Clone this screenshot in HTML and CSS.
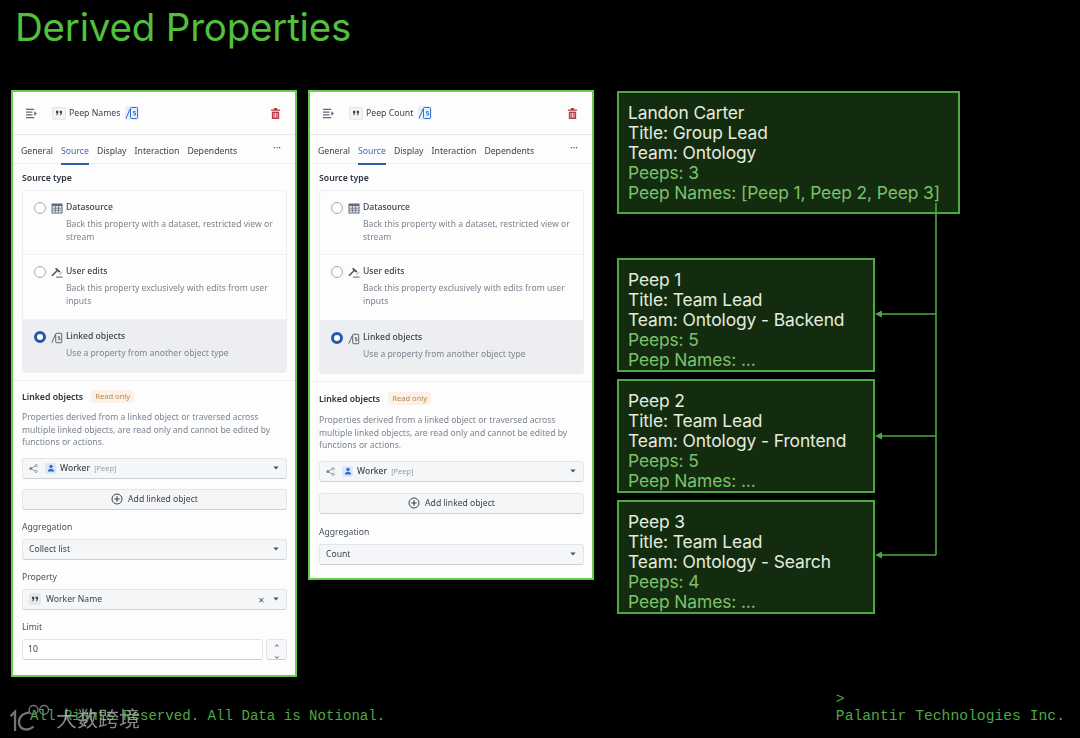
FILE: index.html
```html
<!DOCTYPE html>
<html lang="en">
<head>
<meta charset="utf-8">
<title>Derived Properties</title>
<link rel="stylesheet" href="styles.css">
</head>
<body>
<svg width="0" height="0" class="defs">
  <defs>
    <symbol id="i-menu" viewBox="0 0 14 12"><path d="M1 1.5h9M1 4.5h7M1 7.5h7M1 10.5h9" stroke="#5f6b7a" stroke-width="1.4" fill="none"/><path d="M10 3.5l3 2.5-3 2.5z" fill="#5f6b7a"/></symbol>
    <symbol id="i-quote" viewBox="0 0 10 8"><path d="M1 1h3v3L2.6 7H1.4l.8-3H1zM6 1h3v3L7.6 7H6.4l.8-3H6z" fill="#39424e"/></symbol>
    <symbol id="i-fn" viewBox="0 0 14 14"><path d="M1 12.5L5 3" stroke="currentColor" stroke-width="1" fill="none"/><rect x="5.5" y="1.5" width="7" height="11" rx="1" stroke="currentColor" stroke-width="1" fill="none"/><path d="M10.5 5.5H8.5v1.5h2v2h-2.2" stroke="currentColor" stroke-width=".9" fill="none"/></symbol>
    <symbol id="i-trash" viewBox="0 0 12 14"><path d="M1 2.5h10v1.5H1zM4.2 1h3.6v1.5H4.2z" fill="#b83a44"/><path d="M2 5h8v8H2z" fill="#b83a44"/><path d="M4.3 6.5v5M6 6.5v5M7.7 6.5v5" stroke="#fff" stroke-width=".8"/></symbol>
    <symbol id="i-table" viewBox="0 0 12 11"><path d="M.5.5h11v10H.5z" fill="#5f6b7a"/><path d="M1.5 3h9v6.5h-9z" fill="#e8ebee"/><path d="M1.5 5.2h9M1.5 7.3h9M4.4 3v6.5M7.5 3v6.5" stroke="#5f6b7a" stroke-width=".8"/></symbol>
    <symbol id="i-edit" viewBox="0 0 13 12"><path d="M1 9.5L6.5 4" stroke="#46505c" stroke-width="1.6"/><path d="M5 1.5l4.5 4" stroke="#46505c" stroke-width="2"/><path d="M5.5 11h7" stroke="#46505c" stroke-width="1"/><path d="M9 8.5l3-3" stroke="#8a94a0" stroke-width="1"/></symbol>
    <symbol id="i-share" viewBox="0 0 12 12"><circle cx="2.5" cy="6" r="2" fill="#7b8794"/><circle cx="9.5" cy="2.2" r="1.6" fill="none" stroke="#7b8794"/><circle cx="9.5" cy="9.8" r="1.6" fill="none" stroke="#7b8794"/><path d="M3.5 5.2l4.7-2.5M3.5 6.8l4.7 2.5" stroke="#7b8794"/></symbol>
    <symbol id="i-user" viewBox="0 0 10 10"><circle cx="5" cy="3" r="2.2" fill="#2f6fcf"/><path d="M1 9.5c0-2.6 1.8-3.6 4-3.6s4 1 4 3.6z" fill="#2f6fcf"/></symbol>
    <symbol id="i-plus" viewBox="0 0 12 12"><circle cx="6" cy="6" r="5" fill="none" stroke="#39424e" stroke-width="1"/><path d="M6 3.3v5.4M3.3 6h5.4" stroke="#39424e" stroke-width="1.1"/></symbol>
    <symbol id="i-caret" viewBox="0 0 8 5"><path d="M.5.5h7L4 4.5z" fill="#46505c"/></symbol>
  </defs>
</svg>
<main class="slide">
  <h1 class="title">Derived Properties</h1>
  <div class="content">
    <section class="panel panel-names">
      <header class="phead">
        <svg class="ico-menu"><use href="#i-menu"/></svg>
        <span class="qbox"><svg class="ico-q"><use href="#i-quote"/></svg></span>
        <span class="pname">Peep Names</span>
        <span class="fnbox"><svg class="ico-fn"><use href="#i-fn"/></svg></span>
        <svg class="ico-trash"><use href="#i-trash"/></svg>
      </header>
      <nav class="tabs">
        <span class="tab">General</span><span class="tab active">Source</span><span class="tab">Display</span><span class="tab">Interaction</span><span class="tab">Dependents</span><span class="more">•••</span>
      </nav>
      <div class="sec">
        <div class="label-b">Source type</div>
        <div class="card">
          <div class="opt opt-a"><span class="radio"></span><svg class="ico-o"><use href="#i-table"/></svg><div class="otext"><div class="otitle">Datasource</div><div class="odesc">Back this property with a dataset, restricted view or stream</div></div></div>
          <div class="opt opt-b"><span class="radio"></span><svg class="ico-o"><use href="#i-edit"/></svg><div class="otext"><div class="otitle">User edits</div><div class="odesc">Back this property exclusively with edits from user inputs</div></div></div>
          <div class="opt opt-c sel"><span class="radio on"></span><svg class="ico-o ico-l"><use href="#i-fn"/></svg><div class="otext"><div class="otitle">Linked objects</div><div class="odesc">Use a property from another object type</div></div></div>
        </div>
      </div>
      <div class="sec2">
        <div class="lhead"><span class="label-b">Linked objects</span><span class="tag">Read only</span></div>
        <p class="desc">Properties derived from a linked object or traversed across multiple linked objects, are read only and cannot be edited by functions or actions.</p>
        <div class="select sel-worker"><svg class="ico-s"><use href="#i-share"/></svg><span class="ubox"><svg class="ico-u"><use href="#i-user"/></svg></span><span class="sval strong">Worker</span><span class="sub">[Peep]</span><svg class="caret"><use href="#i-caret"/></svg></div>
        <div class="btn"><svg class="ico-p"><use href="#i-plus"/></svg><span>Add linked object</span></div>
        <div class="flabel">Aggregation</div>
        <div class="select"><span class="sval">Collect list</span><svg class="caret"><use href="#i-caret"/></svg></div>
        <div class="flabel">Property</div>
        <div class="select"><span class="qbox small"><svg class="ico-q"><use href="#i-quote"/></svg></span><span class="sval">Worker Name</span><span class="clear">✕</span><svg class="caret tight"><use href="#i-caret"/></svg></div>
        <div class="flabel">Limit</div>
        <div class="limit"><div class="input">10</div><div class="stepper"><span>⌃</span><span class="down">⌃</span></div></div>
      </div>
    </section>

    <section class="panel panel-count">
      <header class="phead">
        <svg class="ico-menu"><use href="#i-menu"/></svg>
        <span class="qbox"><svg class="ico-q"><use href="#i-quote"/></svg></span>
        <span class="pname">Peep Count</span>
        <span class="fnbox"><svg class="ico-fn"><use href="#i-fn"/></svg></span>
        <svg class="ico-trash"><use href="#i-trash"/></svg>
      </header>
      <nav class="tabs">
        <span class="tab">General</span><span class="tab active">Source</span><span class="tab">Display</span><span class="tab">Interaction</span><span class="tab">Dependents</span><span class="more">•••</span>
      </nav>
      <div class="sec">
        <div class="label-b">Source type</div>
        <div class="card">
          <div class="opt opt-a"><span class="radio"></span><svg class="ico-o"><use href="#i-table"/></svg><div class="otext"><div class="otitle">Datasource</div><div class="odesc">Back this property with a dataset, restricted view or stream</div></div></div>
          <div class="opt opt-b"><span class="radio"></span><svg class="ico-o"><use href="#i-edit"/></svg><div class="otext"><div class="otitle">User edits</div><div class="odesc">Back this property exclusively with edits from user inputs</div></div></div>
          <div class="opt opt-c sel"><span class="radio on"></span><svg class="ico-o ico-l"><use href="#i-fn"/></svg><div class="otext"><div class="otitle">Linked objects</div><div class="odesc">Use a property from another object type</div></div></div>
        </div>
      </div>
      <div class="sec2">
        <div class="lhead"><span class="label-b">Linked objects</span><span class="tag">Read only</span></div>
        <p class="desc">Properties derived from a linked object or traversed across multiple linked objects, are read only and cannot be edited by functions or actions.</p>
        <div class="select sel-worker"><svg class="ico-s"><use href="#i-share"/></svg><span class="ubox"><svg class="ico-u"><use href="#i-user"/></svg></span><span class="sval strong">Worker</span><span class="sub">[Peep]</span><svg class="caret"><use href="#i-caret"/></svg></div>
        <div class="btn"><svg class="ico-p"><use href="#i-plus"/></svg><span>Add linked object</span></div>
        <div class="flabel">Aggregation</div>
        <div class="select"><span class="sval">Count</span><svg class="caret"><use href="#i-caret"/></svg></div>
      </div>
    </section>

    <aside class="cards">
      <div class="box box-top">
        <div>Landon Carter</div><div>Title: Group Lead</div><div>Team: Ontology</div><div class="g">Peeps: 3</div><div class="g">Peep Names: [Peep 1, Peep 2, Peep 3]</div>
      </div>
      <div class="box box-sub">
        <div>Peep 1</div><div>Title: Team Lead</div><div>Team: Ontology - Backend</div><div class="g">Peeps: 5</div><div class="g">Peep Names: ...</div>
      </div>
      <div class="box box-sub">
        <div>Peep 2</div><div>Title: Team Lead</div><div>Team: Ontology - Frontend</div><div class="g">Peeps: 5</div><div class="g">Peep Names: ...</div>
      </div>
      <div class="box box-sub">
        <div>Peep 3</div><div>Title: Team Lead</div><div>Team: Ontology - Search</div><div class="g">Peeps: 4</div><div class="g">Peep Names: ...</div>
      </div>
    </aside>
  </div>
  <footer class="foot">
    <span class="foot-l">All Rights Reserved. All Data is Notional.</span>
    <span class="foot-r"><span>&gt;</span><span>Palantir Technologies Inc.</span></span>
  </footer>

  <svg class="wires" viewBox="0 0 1080 738">
    <path d="M936 203V555M936 314H878M936 436H878M936 555H878" stroke="#4ea843" stroke-width="1.6" fill="none"/>
    <path d="M875 314l7-3.5v7zM875 436l7-3.5v7zM875 555l7-3.5v7z" fill="#4ea843"/>
  </svg>
  <div class="wm">
    <svg class="wm-logo" viewBox="0 0 50 34"><path d="M3 16l5-5v22M25 12C15 12 11 20 13 26c2 6 10 7 16 2" stroke="#9a9a9a" stroke-width="2.6" fill="none"/><circle cx="29" cy="9" r="5" stroke="#9a9a9a" stroke-width="1.6" fill="none"/><circle cx="41" cy="9" r="5" stroke="#9a9a9a" stroke-width="1.6" fill="none"/></svg>
    <span class="wm-t">大数跨境</span>
  </div>
</main>
</body>
</html>
```
FILE: styles.css
```css
* { box-sizing: border-box; }
html, body { margin: 0; padding: 0; background: #000; }
.defs { position: absolute; }
.slide {
  position: relative;
  width: 1080px;
  height: 738px;
  overflow: hidden;
  background: #000;
  display: flex;
  flex-direction: column;
  font-family: "Noto Sans", sans-serif;
}
.title {
  margin: 0;
  height: 90px;
  padding: 4px 0 0 15px;
  font: 400 38.5px/46px Inter, "Liberation Sans", sans-serif;
  color: #52c03c;
  letter-spacing: -0.2px;
}
.content { display: flex; align-items: flex-start; padding-left: 11px; }

.panel {
  width: 286px;
  background: #fdfdfd;
  border: 2.5px solid #66cc4c;
  color: #39424e;
  font-size: 8.6px;
  filter: blur(0.35px);
  flex: none;
}
.panel-names { height: 587px; }
.panel-count { height: 490px; margin-left: 11px; }

.phead {
  height: 43px;
  display: flex;
  align-items: center;
  padding: 0 14px 0 12px;
  border-bottom: 1px solid #e6e8eb;
}
.ico-menu { width: 13px; height: 11px; }
.qbox {
  width: 14px; height: 13px; margin-left: 14px;
  background: #f3f4f6; border: 1px solid #e3e5e8; border-radius: 2px;
  display: flex; align-items: center; justify-content: center;
}
.qbox.small { margin: 0 5px 0 0; width: 12px; height: 12px; background: #e6e8eb; }
.ico-q { width: 8px; height: 6px; }
.pname { margin-left: 3px; font-size: 8.7px; color: #39424e; }
.fnbox {
  width: 14px; height: 14px; margin-left: 5px; color: #2f6fcf;
  background: #e6effa; border-radius: 2px; display: flex;
}
.ico-fn { width: 14px; height: 14px; }
.ico-trash { width: 11px; height: 13px; margin-left: auto; }

.tabs {
  height: 29px;
  display: flex;
  align-items: center;
  padding: 2px 14px 0 8px;
  gap: 8px;
  border-bottom: 1px solid #eceef0;
  font-size: 8.7px;
}
.tab { height: 29px; line-height: 31px; white-space: nowrap; }
.tab.active { color: #3f6bb0; border-bottom: 2px solid #2d5fa8; }
.more { margin-left: auto; font-size: 6px; letter-spacing: 0.3px; padding-bottom: 5px; color: #46505c; }

.sec { padding: 8px 8px 7px 9px; border-bottom: 1px solid #eceef0; }
.label-b { font-weight: 600; font-size: 8.7px; color: #2b333d; line-height: 12px; }
.card {
  margin-top: 6px;
  border: 1px solid #eceef0;
  border-radius: 3px;
  overflow: hidden;
}
.opt { display: flex; align-items: flex-start; padding: 11px 8px 0 11px; border-bottom: 1px solid #f0f1f3; }
.opt-a { height: 64px; }
.opt-b { height: 65px; }
.opt-c { height: 52px; border-bottom: 0; }
.panel-count .opt-b { height: 66px; }
.opt.sel { background: #eceef1; }
.radio {
  width: 12px; height: 12px; border-radius: 50%;
  border: 1px solid #a4acb6; background: #fff; flex: none;
}
.radio.on { border: 3.5px solid #2559ad; }
.ico-o { width: 12px; height: 11px; margin: 1px 0 0 5px; flex: none; }
.ico-l { color: #46505c; height: 12px; }
.otext { margin-left: 3px; }
.otitle { line-height: 11px; color: #39424e; font-weight: 500; }
.odesc { margin-top: 5px; line-height: 12.8px; color: #7b8490; width: 212px; }

.sec2 { padding: 9px 8px 0 9px; }
.panel-count .sec2 { padding-top: 10px; }
.lhead { display: flex; align-items: center; gap: 8px; }
.tag { background: #fbf1e6; color: #b58a4e; border-radius: 3px; padding: 1px 4px; font-size: 7.6px; line-height: 11px; }
.desc { margin: 8px 0 0; line-height: 12.6px; color: #7b8490; }
.panel-count .desc { margin-top: 9px; }

.select, .btn, .input, .stepper {
  border: 1px solid #e3e5e8;
  border-bottom-color: #ccd0d5;
  border-radius: 3px;
  background: #f5f6f7;
}
.select { height: 21px; display: flex; align-items: center; padding: 0 6px; margin-top: 0; }
.sel-worker { margin-top: 9px; }
.ico-s { width: 9px; height: 9px; }
.ubox { width: 11px; height: 11px; background: #dbe8f8; border-radius: 2px; margin: 0 4px 0 7px; display: flex; align-items: center; justify-content: center; }
.ico-u { width: 8px; height: 8px; }
.sval { color: #39424e; }
.sval.strong { font-weight: 500; }
.sub { margin-left: 4px; font-size: 7.4px; color: #98a0aa; }
.caret { width: 6px; height: 4px; margin-left: auto; margin-right: 1px; }
.caret.tight { margin-left: 8px; }
.clear { margin-left: auto; font-size: 8px; color: #46505c; }
.btn { height: 21px; margin-top: 10px; display: flex; align-items: center; justify-content: center; color: #39424e; }
.ico-p { width: 12px; height: 12px; margin-right: 5px; }
.panel-count .btn { margin-top: 11px; }
.flabel { margin: 11px 0 6px; line-height: 12px; color: #46505c; }
.panel-count .flabel { margin-top: 12px; }
.limit { display: flex; gap: 3px; }
.input { flex: 1; height: 21px; background: #fff; line-height: 19px; padding-left: 5px; }
.stepper { width: 21px; height: 21px; display: flex; flex-direction: column; align-items: center; line-height: 9px; font-size: 9px; color: #46505c; background: #f7f8f9; overflow: hidden; padding-top: 3px; }
.stepper .down { transform: scaleY(-1); margin-top: -1px; }

.cards {
  margin-left: 23px;
  margin-top: 1px;
  display: flex;
  flex-direction: column;
  align-items: flex-start;
  gap: 7px;
  font: 400 17.4px/20.1px "Inter", "Liberation Sans", sans-serif;
  color: #e4ecdf;
  letter-spacing: -0.1px;
}
.box {
  background: #132c0f;
  border: 2px solid #4ea843;
  padding: 10px 9px 0;
  white-space: nowrap;
}
.box-top { width: 343px; height: 123px; margin-bottom: 37px; }
.box-sub { width: 258px; height: 114px; }
.g { color: #7cc26a; }

.foot {
  margin-top: auto;
  height: 45px;
  padding: 0 15px 13px 30px;
  display: flex;
  justify-content: space-between;
  align-items: flex-end;
  font: 400 14.1px/17px "Liberation Mono", monospace;
  color: #4ea843;
}
.foot-r { display: flex; flex-direction: column; font-size: 14.7px; }

.wires { position: absolute; inset: 0; width: 1080px; height: 738px; pointer-events: none; }
.wm { position: absolute; left: 8px; top: 702px; display: flex; align-items: center; opacity: .75; }
.wm-logo { width: 44px; height: 30px; }
.wm-t { margin-left: 4px; font: 400 21px/26px "Noto Sans CJK SC", sans-serif; color: #b5b5b5; }
```
